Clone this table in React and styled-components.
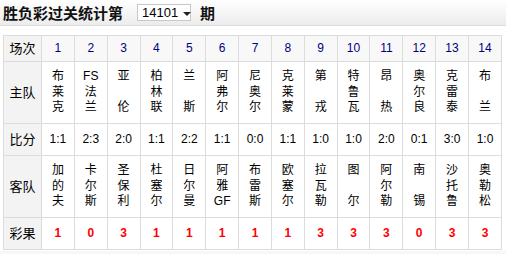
import React from "react";
import styled, { createGlobalStyle } from "styled-components";

const GlobalStyle = createGlobalStyle`
  body {
    margin: 0;
    background: #fff;
    font-family: "Liberation Sans", "Noto Sans CJK SC", sans-serif;
    font-size: 12px;
    color: #000;
  }
`;

const Page = styled.div`
  width: 506px;
  height: 254px;
  overflow: hidden;
`;

const TitleBar = styled.div`
  height: 26px;
  box-sizing: border-box;
  display: flex;
  align-items: center;
  padding-left: 3px;
  background: linear-gradient(#ffffff, #ececec);
  border-bottom: 1px solid #dcdcdc;
`;

const Title = styled.span`
  font-family: "Noto Sans CJK SC", sans-serif;
  font-weight: bold;
  font-size: 15px;
  letter-spacing: 0px;
  color: #111;
`;

const Select = styled.div`
  margin-left: 14px;
  margin-right: 9px;
  width: 54px;
  height: 17px;
  box-sizing: border-box;
  border: 1px solid #c8c8c8;
  background: #fff;
  display: flex;
  align-items: center;
  padding-left: 4px;
  font-family: "Liberation Sans", sans-serif;
  font-size: 13px;
  color: #000;
`;

const Caret = styled.span`
  margin-left: 5px;
  width: 0;
  height: 0;
  border-left: 4px solid transparent;
  border-right: 4px solid transparent;
  border-top: 4px solid #222;
  margin-top: 2px;
`;

const Table = styled.table`
  margin: 9px 0 0 3px;
  width: 499px;
  table-layout: fixed;
  border-collapse: collapse;
  border: 1px solid #dcdcdc;
`;

const Cell = styled.td`
  border: 1px solid #dcdcdc;
  padding: 0;
  height: ${(p) => p.$h}px;
  text-align: center;
  vertical-align: middle;
  background: ${(p) => (p.$head ? "#f3f3f3" : p.$shade ? "#f8f8f8" : "#fff")};
  color: ${(p) => p.$color || "#000"};
  font-weight: ${(p) => (p.$bold ? "bold" : "normal")};
  font-family: "Liberation Sans", "Noto Sans CJK SC", sans-serif;
  font-size: ${(p) => (p.$head ? 13 : 12)}px;
  line-height: 15px;
`;

const Line = styled.div`
  height: 15.5px;
  line-height: 15.5px;
  font-size: 12px;
`;

const Footer = styled.div`
  margin-top: 1px;
  height: 10px;
  background: #f7f7f7;
`;

const rows = {
  home: [
    ["布", "莱", "克"], ["FS", "法", "兰"], ["亚", "", "伦"], ["柏", "林", "联"],
    ["兰", "", "斯"], ["阿", "弗", "尔"], ["尼", "奥", "尔"], ["克", "莱", "蒙"],
    ["第", "", "戎"], ["特", "鲁", "瓦"], ["昂", "", "热"], ["奥", "尔", "良"],
    ["克", "雷", "泰"], ["布", "", "兰"],
  ],
  scores: ["1:1", "2:3", "2:0", "1:1", "2:2", "1:1", "0:0", "1:1", "1:0", "1:0", "2:0", "0:1", "3:0", "1:0"],
  away: [
    ["加", "的", "夫"], ["卡", "尔", "斯"], ["圣", "保", "利"], ["杜", "塞", "尔"],
    ["日", "尔", "曼"], ["阿", "雅", "GF"], ["布", "雷", "斯"], ["欧", "塞", "尔"],
    ["拉", "瓦", "勒"], ["图", "", "尔"], ["阿", "尔", "勒"], ["南", "", "锡"],
    ["沙", "托", "鲁"], ["奥", "勒", "松"],
  ],
  results: ["1", "0", "3", "1", "1", "1", "1", "1", "3", "3", "3", "0", "3", "3"],
};

const Name = ({ lines }) => (
  <>
    {lines.map((l, i) => (
      <Line key={i}>{l || "\u00a0"}</Line>
    ))}
  </>
);

const App = () => {
  const nums = rows.scores.map((_, i) => i + 1);
  return (
    <Page>
      <GlobalStyle />
      <TitleBar>
        <Title>胜负彩过关统计第</Title>
        <Select>
          14101
          <Caret />
        </Select>
        <Title>期</Title>
      </TitleBar>
      <Table>
        <colgroup>
          <col style={{ width: 38 }} />
          {nums.map((n) => (
            <col key={n} />
          ))}
        </colgroup>
        <tbody>
          <tr>
            <Cell $h={25} $head>场次</Cell>
            {nums.map((n) => (
              <Cell key={n} $h={25} $shade $color="#000080">{n}</Cell>
            ))}
          </tr>
          <tr>
            <Cell $h={61} $head>主队</Cell>
            {rows.home.map((t, i) => (
              <Cell key={i} $h={61}><Name lines={t} /></Cell>
            ))}
          </tr>
          <tr>
            <Cell $h={31} $head>比分</Cell>
            {rows.scores.map((s, i) => (
              <Cell key={i} $h={31}>{s}</Cell>
            ))}
          </tr>
          <tr>
            <Cell $h={61} $head>客队</Cell>
            {rows.away.map((t, i) => (
              <Cell key={i} $h={61}><Name lines={t} /></Cell>
            ))}
          </tr>
          <tr>
            <Cell $h={31} $head>彩果</Cell>
            {rows.results.map((r, i) => (
              <Cell key={i} $h={31} $bold $color="#ff0000">{r}</Cell>
            ))}
          </tr>
        </tbody>
      </Table>
      <Footer />
    </Page>
  );
};

export default App;
